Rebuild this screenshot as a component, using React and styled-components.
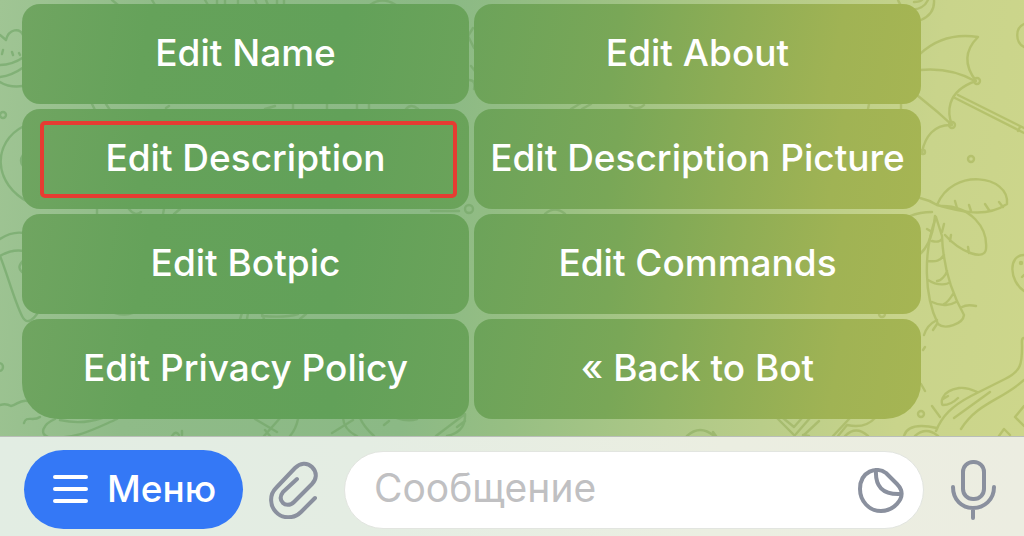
import React from 'react';
import styled, { createGlobalStyle } from 'styled-components';

const keyboard = [
  { label: 'Edit Name' },
  { label: 'Edit About' },
  { label: 'Edit Description', marked: true },
  { label: 'Edit Description Picture' },
  { label: 'Edit Botpic' },
  { label: 'Edit Commands' },
  { label: 'Edit Privacy Policy' },
  { label: '« Back to Bot' },
];

const Doodles = () => (
  <Wallpaper viewBox='0 0 1024 436' preserveAspectRatio='xMidYMid slice' aria-hidden='true'>
    <defs>
      <linearGradient id='ink' x1='0' y1='0' x2='1024' y2='0' gradientUnits='userSpaceOnUse'>
        <stop offset='0' stopColor='#6fa565' />
        <stop offset='0.5' stopColor='#74a666' />
        <stop offset='0.85' stopColor='#a5b45c' />
        <stop offset='1' stopColor='#a9b658' />
      </linearGradient>
    </defs>
    <g fill='none' stroke='url(#ink)' strokeWidth='2.4' strokeLinecap='round' strokeLinejoin='round' opacity='0.6'>
      {/* cupcake and balloon */}
      <path d='M0 35l6 5c3-12 14-12 17-5M2 54l1-4M12 52l1 3M19 53l1 2M0 65c10 0 18-4 24-8M0 77c9-1 17-5 24-10M0 82c8 5 16 5 23 4' />
      <circle cx='3' cy='115' r='3' />
      <path d='M24 126C-8 142-8 184 30 203M23 155q-4 6 0 11' />
      {/* pizza slice */}
      <path d='M0 239q12-8 24-6M0 256q12-7 24-5M0 256c8 20 14 44 22 60 4 8 9 6 15-2M24 260q-8 7-2 12' />
      <circle cx='-1' cy='367' r='4' />
      <path d='M0 405q6-2 11 1c6-1 9-7 17-5M24 423c2-8 9-1 16-6M55 419c-12 5-16 15-7 18 28 3 46-8 69-18M60 420q22 5 42-2' />
      {/* umbrella */}
      <path d='M920 54C938 37 958 34 978 37C962 53 966 68 976 81C944 92 948 115 952 125C934 108 924 101 918 96M920 70q30-3 55 11M952 125c-18-1-27 12-30 27' />
      <path d='M958 95l66 33M955 98l69 35M1020 127l-2 4' />
      <circle cx='977' cy='81' r='3' />
      <circle cx='952' cy='125' r='3' />
      <circle cx='923' cy='152' r='2' />
      <circle cx='971' cy='159' r='3' />
      <path d='M1024 24c-9 4-9 18 0 23M898 0c4 12 24 13 30 0M914 2q6 0 8-2M921 20q14-6 13-20' />
      {/* palm tree */}
      <path d='M920 198q9 2 17 7C952 167 1010 175 1007 204C986 218 962 212 937 205M955 201l2 7M969 205l2 6M985 204l4 6M999 202l4 5' />
      <path d='M942 206c28 0 46 21 44 43c-1 12-25 4-41-14M935 216l-1 8c-3 16-7 24-14 30M951 235l-1 6M968 247l1 6M910 216q10-4 22-4' />
      <path d='M936 217c-13 35-12 79 2 107 7 6 25 0 26-9C950 290 943 265 942 236L936 217M932 241q7 2 10-2M928 261c8 1 12 0 16-6M928 280c11 7 20 4 22 2M932 302c10 5 19 3 24 0M937 281c4 0 9-6 10-10M944 304c4-2 6-5 9-10M927 229l5 3M944 224l-2 8' />
      <path d='M962 307q5-3 14-1M937 320q-10 5-13 15M937 324l-4 6M923 350l2-3M921 384l4 7' />
      {/* lizard and shapes below the keyboard */}
      <path d='M1024 255c-16 0-15 26 0 36M1022 277l2-2M1024 338c-3 0-2 5-2 9 0 17-1 24-17 32L971 396C952 406 942 416 936 431M961 429c16-26 41-29 63-49M954 418l36-26M943 405c-2 0-4-14 16-17 9-1 14 2 18 4M943 405c8 0 13-5 15-7M943 399l5-3M932 406l8 11M904 436c4-14 24-10 33-8M915 436q11-10 23 0M1024 406l-9 11 9 9M999 436l5-7 6 6' />
      <circle cx='1021' cy='263' r='1' />
      <circle cx='921' cy='414' r='3' />
      <path d='M687 436q13-12 27 0M713 432l3 4M777 418l18 18M783 418l11 9 8-9M796 434l14-16M803 436l16-15M809 436l-6-1M833 436l17-18M838 436l9-11q18 4 28-7M845 436q11-11 23 0' />
      {/* strokes peeking between the rows */}
      <path d='M112 0l6 5M152 0l3 5M205 0l3 5M217 0v5M225 0v5M238 0v5M255 0l2 5M266 0l2 5M277 0v5M284 0v5M370 5q12-9 26 0M92 104l3 6M106 104l4 6M166 108l3-2M265 109l10-3M293 104v6M327 104v6M357 104v6M369 104v6M406 109q5-6 12 0M571 109l10-6M582 109l9-5M630 106q8 5 14-1M868 109l1-5M901 104v6M473 28l-5 8 6 12M471 66l4 5M469 80q7 0 5 9' />
      <path d='M97 209v5M129 209q6 8 12 3M164 209l-1 5M180 209l-6 5M431 211h28M545 214q10-9 20 0M115 313q10 3 18 0M240 319l2-6M247 319l1-6M262 314l2 5M300 319l6-5M262 316q24 2 36-2' />
      <circle cx='469' cy='209' r='4' />
      <circle cx='882' cy='314' r='3' />
      <path d='M172 436q4-6 7-1M182 435v-4M255 419l22 13M264 436l17-19M270 436l-5-6M298 419q-2 10-8 17M332 433l21-13' />
      <path d='M343 418q1 12 14 18M360 418q4 9 14 18M384 425l5-4M397 418q11 4 20 1M436 436l29-22q1 18-18 22M457 427l8-6' />
    </g>
  </Wallpaper>
);

const App = () => {
  return (
    <Page>
      <GlobalStyle />
      <Chat>
        <Doodles />
        <Keyboard>
          {keyboard.map(({ label, marked }) => (
            <Key key={label} type='button'>
              {label}
              {marked && <Marker />}
            </Key>
          ))}
        </Keyboard>
      </Chat>
      <InputBar onSubmit={(e) => e.preventDefault()}>
        <MenuButton type='button'>
          <svg width='38' height='30' viewBox='0 0 38 30' aria-hidden='true'>
            <path d='M4 3h31M4 15h31M4 27h31' stroke='#fff' strokeWidth='4' strokeLinecap='round' />
          </svg>
          Меню
        </MenuButton>
        <IconButton type='button' aria-label='Attach'>
          <svg width='49' height='58' viewBox='0 0 49 58'>
            <path d='M46 37L32 51C25 58 13 58 7 51C1 45 0 34 7 27L26 7C31 2 38 1 43 6C49 12 47 19 43 23L25 41C21 45 16 44 14 42C11 39 11 35 14 31L28 18' />
          </svg>
        </IconButton>
        <Field>
          <Message type='text' placeholder='Сообщение' aria-label='Сообщение' />
          <IconButton type='button' aria-label='Stickers'>
            <svg width='46' height='46' viewBox='0 0 46 46'>
              <path d='M28 6C19-1 2 4 2 22C2 34 11 44 23 44C36 44 46 32 43 23C42 20 41 19 39 17ZM18 3C17 19 24 28 43 27' />
            </svg>
          </IconButton>
        </Field>
        <IconButton type='button' aria-label='Voice message'>
          <svg width='46' height='60' viewBox='0 0 46 60'>
            <rect x='13' y='2' width='21' height='37' rx='10' />
            <path d='M3 27C3 40 12 48 23 48S44 40 44 27M23 48v10' />
          </svg>
        </IconButton>
      </InputBar>
    </Page>
  );
};

export default App;

const GlobalStyle = createGlobalStyle`
  * {
    box-sizing: border-box;
  }
  body {
    margin: 0;
  }
  button,
  input {
    font-family: Inter, 'Liberation Sans', sans-serif;
    border: 0;
    padding: 0;
    background: none;
  }
  button {
    cursor: pointer;
  }
`;

const Page = styled.main`
  min-height: 100vh;
  display: flex;
  flex-direction: column;
`;

const Chat = styled.section`
  flex: 1;
  position: relative;
  padding: 4px 103px 17px 22px;
  background: linear-gradient(
    97deg,
    #a0c594 0%,
    #8fbb88 16%,
    #8bb985 42%,
    #97bf83 52%,
    #b2ca88 70%,
    #c9d48b 88%,
    #cdd68b 100%
  );
`;

const Wallpaper = styled.svg`
  position: absolute;
  inset: 0;
  width: 100%;
  height: 100%;
`;

const Keyboard = styled.div`
  position: relative;
  display: grid;
  grid-template-columns: 1fr 1fr;
  gap: 5px;
`;

const Key = styled.button`
  position: relative;
  height: 100px;
  padding-bottom: 4px;
  border-radius: 18px;
  color: #fff;
  font-size: 37px;
  font-weight: 500;
  white-space: nowrap;
  background: linear-gradient(100deg, #70a561 0%, #65a25a 28%, #62a159 70%, #6ba35a 100%);

  &:nth-child(even) {
    background: linear-gradient(100deg, #6ca35a 0%, #79a757 32%, #8dad55 56%, #a0b354 80%, #a6b553 100%);
  }

  &:nth-last-child(2) {
    border-bottom-left-radius: 36px;
  }

  &:last-child {
    border-bottom-right-radius: 36px;
  }
`;

const Marker = styled.span`
  position: absolute;
  inset: 12px 12px 11px 18px;
  border: 4px solid #e63c32;
  border-radius: 5px;
`;

const InputBar = styled.form`
  display: flex;
  align-items: center;
  gap: 26px;
  padding: 13px 28px 7px 24px;
  border-top: 1px solid #b9beb8;
  background: linear-gradient(97deg, #e2ede3 0%, #e4ede3 35%, #ebeee1 70%, #ecede1 100%);
`;

const MenuButton = styled.button`
  display: flex;
  align-items: center;
  justify-content: center;
  gap: 18px;
  flex-shrink: 0;
  width: 219px;
  height: 79px;
  padding-bottom: 2px;
  border-radius: 40px;
  color: #fff;
  font-size: 37px;
  font-weight: 500;
  background: #3478f6;
`;

const IconButton = styled.button`
  display: flex;
  flex-shrink: 0;

  svg {
    fill: none;
    stroke: #8a909e;
    stroke-width: 4;
    stroke-linecap: round;
    stroke-linejoin: round;
  }
`;

const Field = styled.div`
  flex: 1;
  min-width: 0;
  display: flex;
  align-items: center;
  height: 78px;
  padding: 0 19px 0 29px;
  border: 1px solid #e2e5e0;
  border-radius: 39px;
  background: #fff;
`;

const Message = styled.input`
  flex: 1;
  min-width: 0;
  height: 60px;
  padding-bottom: 4px;
  font-size: 39px;
  outline: 0;

  &::placeholder {
    color: #c0c0c2;
    opacity: 1;
  }
`;
